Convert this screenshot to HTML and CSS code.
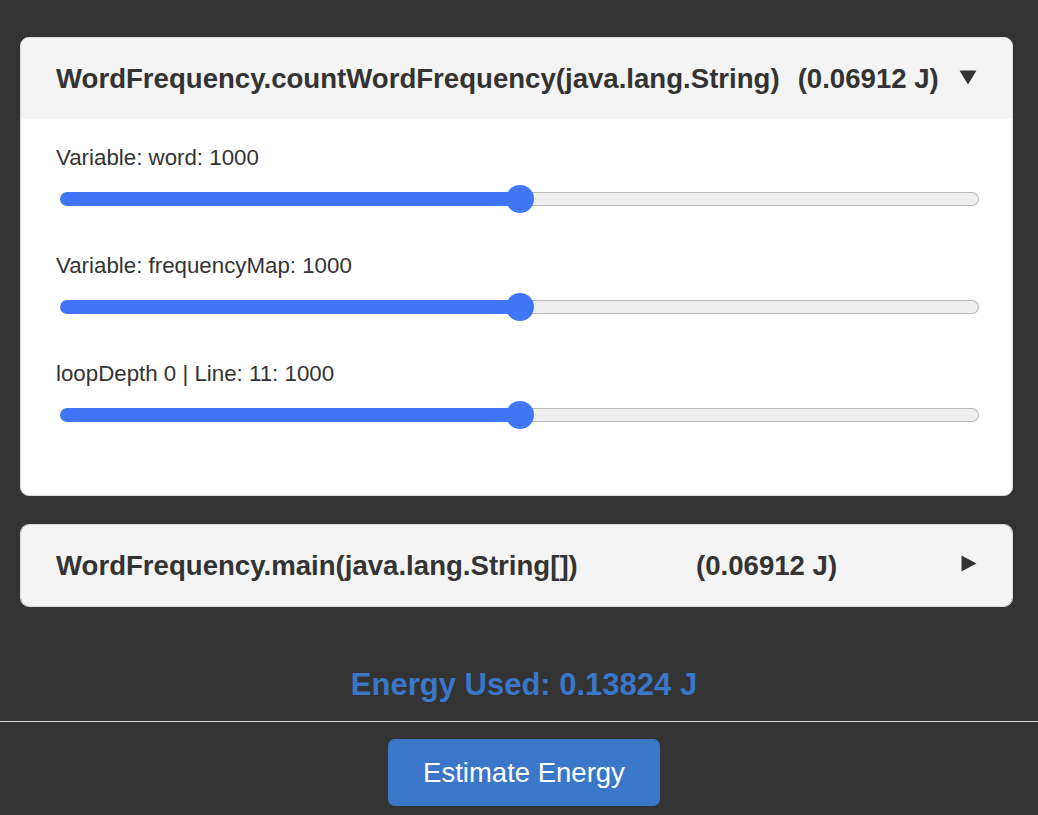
FILE: index.html
```html
<!DOCTYPE html>
<html lang="en">
<head>
<meta charset="utf-8">
<title>Energy Estimator</title>
<link rel="stylesheet" href="styles.css">
</head>
<body>
<main class="page">
  <section class="methods">
    <div class="card">
      <div class="card-header">
        <span class="method-name">WordFrequency.countWordFrequency(java.lang.String)</span>
        <span class="method-energy">(0.06912 J)</span>
        <svg class="toggle toggle-down" width="18" height="15" viewBox="0 0 18 15"><polygon points="0.5,0.5 17.5,0.5 9,14.5" fill="#333"/></svg>
      </div>
      <div class="card-body">
        <div class="var-row">
          <div class="var-label">Variable: word: 1000</div>
          <div class="slider">
            <div class="track"><div class="fill" style="width:50%"></div></div>
            <div class="thumb" style="left:calc(50% - 14px)"></div>
          </div>
        </div>
        <div class="var-row">
          <div class="var-label">Variable: frequencyMap: 1000</div>
          <div class="slider">
            <div class="track"><div class="fill" style="width:50%"></div></div>
            <div class="thumb" style="left:calc(50% - 14px)"></div>
          </div>
        </div>
        <div class="var-row">
          <div class="var-label">loopDepth 0 | Line: 11: 1000</div>
          <div class="slider">
            <div class="track"><div class="fill" style="width:50%"></div></div>
            <div class="thumb" style="left:calc(50% - 14px)"></div>
          </div>
        </div>
      </div>
    </div>
    <div class="card">
      <div class="card-header">
        <span class="method-name">WordFrequency.main(java.lang.String[])</span>
        <span class="method-energy">(0.06912 J)</span>
        <svg class="toggle toggle-right" width="16" height="17" viewBox="0 0 16 17"><polygon points="0.5,0.5 15.5,8.5 0.5,16.5" fill="#333"/></svg>
      </div>
    </div>
  </section>
  <section class="summary">
    <div class="energy-used">Energy Used: 0.13824 J</div>
  </section>
  <hr class="divider">
  <section class="actions">
    <button class="estimate-btn" type="button">Estimate Energy</button>
  </section>
</main>
</body>
</html>
```
FILE: styles.css
```css
html, body {
  margin: 0;
  padding: 0;
  background: #333333;
}
body {
  font-family: "Liberation Sans", Arial, Helvetica, sans-serif;
  color: #333333;
}
.page {
  display: flex;
  flex-direction: column;
  min-height: 815px;
}
.methods {
  display: flex;
  flex-direction: column;
  gap: 28px;
  padding: 37px 25px 0 20px;
}
.card {
  background: #ffffff;
  border: 1px solid #dddddd;
  border-radius: 9px;
  overflow: hidden;
}
.card-header {
  display: flex;
  align-items: center;
  gap: 18px;
  background: #f4f4f4;
  padding: 25px 35px 24px 35px;
  font-size: 27.6px;
  line-height: 32px;
  font-weight: bold;
  color: #333333;
}
.method-name {
  flex-shrink: 0;
  min-width: 622px;
  white-space: nowrap;
}
.method-energy {
  white-space: nowrap;
}
.toggle {
  margin-left: auto;
  margin-bottom: 4px;
  flex-shrink: 0;
}
.toggle-right {
  margin-bottom: 6px;
}
.card-body {
  padding: 26px 35px 66px 35px;
  display: flex;
  flex-direction: column;
  gap: 40px;
}
.var-label {
  font-size: 22.3px;
  line-height: 25px;
  color: #333333;
}
.slider {
  position: relative;
  margin: 15px 0 0 4px;
  width: 919px;
  height: 28px;
}
.track {
  position: relative;
  top: 7px;
  height: 14px;
  border-radius: 7px;
  background: #eeeeee;
  box-shadow: inset 0 0 0 1px #bbbbbb;
  overflow: hidden;
}
.fill {
  position: absolute;
  left: 0;
  top: 0;
  height: 100%;
  background: #4075f6;
  border-radius: 7px 0 0 7px;
}
.thumb {
  position: absolute;
  top: 0;
  width: 28px;
  height: 28px;
  border-radius: 50%;
  background: #4075f6;
}
.summary {
  display: flex;
  justify-content: center;
  padding: 60px 0 0 10px;
}
.energy-used {
  font-size: 31px;
  line-height: 36px;
  font-weight: bold;
  color: #3a77c8;
}
.divider {
  margin: 18px 0 0 0;
  border: 0;
  height: 1px;
  background: #dddddd;
}
.actions {
  display: flex;
  justify-content: center;
  padding: 17px 0 0 10px;
}
.estimate-btn {
  width: 272px;
  height: 67px;
  border: 0;
  border-radius: 7px;
  background: #3a77c8;
  color: #ffffff;
  font-family: "Liberation Sans", Arial, Helvetica, sans-serif;
  font-size: 27.5px;
  padding: 0;
  cursor: pointer;
}
```
